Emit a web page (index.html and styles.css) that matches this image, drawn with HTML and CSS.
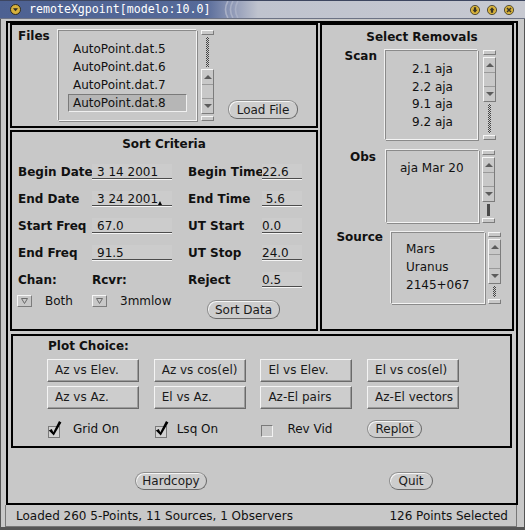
FILE: index.html
```html
<!DOCTYPE html>
<html lang="en">
<head>
    <meta charset="UTF-8">
    <meta name="viewport" content="width=device-width, initial-scale=1.0">
    <title>remoteXgpoint</title>
    <link rel="stylesheet" href="styles.css">
</head>
<body>
    <div class="window">
        <div class="titlebar">
            <svg class="wm-menu" width="11" height="11" viewBox="0 0 11 11">
                <circle cx="5.5" cy="5.5" r="5" fill="#d6b13c" stroke="#2c2a20"/>
                <path d="M3 4.3h5L5.5 7.3z" fill="#2c2a20"/>
            </svg>
            <span class="title">remoteXgpoint[modelo:10.0]</span>
            <svg class="grooves" width="24" height="17" viewBox="0 0 24 17">
                <path d="M6 0Q1 8.5 6 17M11 0Q6 8.5 11 17M16 0Q11 8.5 16 17" fill="none" stroke="#a9b0c6" stroke-width="1.6"/>
            </svg>
            <div class="wm-buttons">
                <svg width="10" height="10" viewBox="0 0 10 10">
                    <circle cx="5" cy="5" r="4.6" fill="#d6b13c" stroke="#3a3524" stroke-width="0.8"/>
                    <path d="M3.9 2.2h2.2v2.6h1.4L5 7.8 2.5 4.8h1.4z" fill="#3a3524"/>
                </svg>
                <svg width="10" height="10" viewBox="0 0 10 10">
                    <circle cx="5" cy="5" r="4.6" fill="#d6b13c" stroke="#3a3524" stroke-width="0.8"/>
                    <path d="M3.9 7.8h2.2V5.2h1.4L5 2.2 2.5 5.2h1.4z" fill="#3a3524"/>
                </svg>
                <svg width="10" height="10" viewBox="0 0 10 10">
                    <circle cx="5" cy="5" r="4.6" fill="#d6b13c" stroke="#3a3524" stroke-width="0.8"/>
                    <path d="M3 3l4 4M7 3l-4 4" stroke="#3a3524" stroke-width="1.5"/>
                </svg>
            </div>
        </div>

        <div class="form">
            <div class="upper">
                <div class="left-col">
                    <!-- file chooser -->
                    <section class="panel files">
                        <div class="label files-label">Files</div>
                        <div class="scroll-list files-box">
                            <div class="list files-list">
                                <div class="item">AutoPoint.dat.5</div>
                                <div class="item">AutoPoint.dat.6</div>
                                <div class="item">AutoPoint.dat.7</div>
                                <div class="item selected">AutoPoint.dat.8</div>
                            </div>
                            <div class="scroll">
                                <span class="cap"></span>
                                <span class="cable"></span>
                                <div class="elevator"><span class="up"></span><span class="drag"></span><span class="down"></span></div>
                                <span class="cap"></span>
                            </div>
                        </div>
                        <button class="pill load-btn">Load File</button>
                    </section>

                    <!-- sort criteria -->
                    <section class="panel sort">
                        <div class="panel-title">Sort Criteria</div>
                        <div class="criteria">
                            <div class="label">Begin Date</div>
                            <div class="field wide">3 14 2001</div>
                            <div class="label">Begin Time</div>
                            <div class="field">22.6</div>

                            <div class="label">End Date</div>
                            <div class="field wide">3 24 2001<span class="caret"></span></div>
                            <div class="label">End Time</div>
                            <div class="field">&nbsp;5.6</div>

                            <div class="label">Start Freq</div>
                            <div class="field wide">67.0</div>
                            <div class="label">UT Start</div>
                            <div class="field">0.0</div>

                            <div class="label">End Freq</div>
                            <div class="field wide">91.5</div>
                            <div class="label">UT Stop</div>
                            <div class="field">24.0</div>

                            <div class="label">Chan:</div>
                            <div class="label">Rcvr:</div>
                            <div class="label">Reject</div>
                            <div class="field">0.5</div>
                        </div>
                        <div class="criteria menus">
                            <div class="menu first-menu">
                                <span class="menu-btn"><svg width="7" height="6" viewBox="0 0 7 6"><path d="M0.5 0.5h6L3.5 5.5z" fill="none" stroke="#6a6a6a"/></svg></span>
                                <span>Both</span>
                            </div>
                            <div class="menu">
                                <span class="menu-btn"><svg width="7" height="6" viewBox="0 0 7 6"><path d="M0.5 0.5h6L3.5 5.5z" fill="none" stroke="#6a6a6a"/></svg></span>
                                <span>3mmlow</span>
                            </div>
                            <button class="pill sort-btn">Sort Data</button>
                        </div>
                    </section>
                </div>

                <!-- removal lists -->
                <section class="panel removals">
                    <div class="panel-title removals-title">Select Removals</div>

                    <div class="pick-row scan-row">
                        <div class="label pick-label">Scan</div>
                        <div class="scroll-list scan-box">
                            <div class="list scan-list">
                                <div class="item">2.1 aja</div>
                                <div class="item">2.2 aja</div>
                                <div class="item">9.1 aja</div>
                                <div class="item">9.2 aja</div>
                            </div>
                            <div class="scroll">
                                <span class="cap"></span>
                                <div class="elevator"><span class="up"></span><span class="drag"></span><span class="down"></span></div>
                                <span class="cable"></span>
                                <span class="cap"></span>
                            </div>
                        </div>
                    </div>

                    <div class="pick-row obs-row">
                        <div class="label pick-label">Obs</div>
                        <div class="scroll-list obs-box">
                            <div class="list obs-list">
                                <div class="item">aja Mar 20</div>
                            </div>
                            <div class="scroll">
                                <span class="cap"></span>
                                <div class="elevator"><span class="up"></span><span class="drag"></span><span class="down"></span></div>
                                <span class="cable solid"></span>
                                <span class="cap"></span>
                            </div>
                        </div>
                    </div>

                    <div class="pick-row source-row">
                        <div class="label pick-label">Source</div>
                        <div class="scroll-list source-box">
                            <div class="list source-list">
                                <div class="item">Mars</div>
                                <div class="item">Uranus</div>
                                <div class="item">2145+067</div>
                            </div>
                            <div class="scroll">
                                <span class="cap"></span>
                                <div class="elevator"><span class="up"></span><span class="drag"></span><span class="down"></span></div>
                                <span class="cable"></span>
                                <span class="cap"></span>
                            </div>
                        </div>
                    </div>
                </section>
            </div>

            <!-- plot selection -->
            <section class="panel plot">
                <div class="label plot-label">Plot Choice:</div>
                <div class="plot-grid">
                    <button class="plot-btn">Az vs Elev.</button>
                    <button class="plot-btn">Az vs cos(el)</button>
                    <button class="plot-btn">El vs Elev.</button>
                    <button class="plot-btn">El vs cos(el)</button>
                    <button class="plot-btn">Az vs Az.</button>
                    <button class="plot-btn">El vs Az.</button>
                    <button class="plot-btn">Az-El pairs</button>
                    <button class="plot-btn">Az-El vectors</button>
                </div>
                <div class="plot-grid options">
                    <label class="option">
                        <svg class="check" width="16" height="18" viewBox="0 0 16 18">
                            <rect x="1.5" y="6.5" width="11" height="11" fill="#d2d2d2" stroke="#7a7a7a"/>
                            <path d="M1.8 10.4l3-1.4 1.5 3.2L12 1l2.4 1.4-7.6 13.2z" fill="#000"/>
                        </svg>
                        <span class="opt-text">Grid On</span>
                    </label>
                    <label class="option">
                        <svg class="check" width="16" height="18" viewBox="0 0 16 18">
                            <rect x="1.5" y="6.5" width="11" height="11" fill="#d2d2d2" stroke="#7a7a7a"/>
                            <path d="M1.8 10.4l3-1.4 1.5 3.2L12 1l2.4 1.4-7.6 13.2z" fill="#000"/>
                        </svg>
                        <span class="opt-text lsq">Lsq On</span>
                    </label>
                    <label class="option">
                        <span class="box"></span>
                        <span class="opt-text rev">Rev Vid</span>
                    </label>
                    <div><button class="pill replot-btn">Replot</button></div>
                </div>
            </section>

            <div class="actions">
                <button class="pill hardcopy-btn">Hardcopy</button>
                <button class="pill quit-btn">Quit</button>
            </div>
        </div>

        <div class="status">
            <span>Loaded 260 5-Points, 11 Sources, 1 Observers</span>
            <span>126 Points Selected</span>
        </div>
    </div>
</body>
</html>
```

FILE: styles.css
```css
* {
    box-sizing: border-box;
}

body {
    margin: 0;
    background: #cccccc;
    font-family: "DejaVu Sans", sans-serif;
    font-size: 12px;
    color: #111;
}

button {
    font: inherit;
    color: #1a1a1a;
    margin: 0;
}

/* window manager frame */
.window {
    width: 525px;
    height: 530px;
    background: #c8c8c8;
    box-shadow: inset 1px 0 #555, inset -1px 0 #555, inset 0 -3px #555;
    display: flex;
    flex-direction: column;
}

.titlebar {
    height: 19px;
    flex: none;
    display: flex;
    align-items: center;
    padding-left: 10px;
    background: linear-gradient(to right, #4d6192 0, #566a99 205px, #8e98b6 232px, #bfc3ce 258px, #c7c9d1 100%);
    border-top: 1px solid #3d4660;
    border-bottom: 1px solid #6c7284;
}

.title {
    margin-left: 8px;
    font-family: "DejaVu Sans Mono", monospace;
    font-size: 11.6px;
    color: #fff;
    line-height: 17px;
}

.grooves {
    display: block;
    margin-left: 12px;
}

.wm-buttons {
    margin-left: auto;
    margin-right: 11px;
    display: flex;
    gap: 7px;
}

.wm-buttons svg {
    display: block;
}

/* main form */
.form {
    margin: 2px 7px 0 6px;
    height: 484px;
    flex: none;
    border: 2px solid #000;
}

.upper {
    display: flex;
    gap: 2px;
    padding-left: 2px;
    height: 308px;
}

.left-col {
    width: 308px;
    display: flex;
    flex-direction: column;
    gap: 2px;
}

.panel {
    border: 2px solid #000;
}

.label {
    font-weight: bold;
    line-height: 14px;
    white-space: nowrap;
}

.panel-title {
    font-weight: bold;
    text-align: center;
    line-height: 14px;
    padding-top: 5px;
}

/* lists with their scrollbars */
.scroll-list {
    display: flex;
    flex: none;
}

.list {
    border: 1px solid;
    border-color: #8a8a8a #f4f4f4 #f4f4f4 #8a8a8a;
    box-shadow: -1px -1px 0 #f0f0f0, 1px 1px 0 #8a8a8a;
    white-space: nowrap;
}

.item {
    line-height: 18px;
    height: 18px;
}

.scroll {
    width: 13px;
    display: flex;
    flex-direction: column;
    align-items: center;
    gap: 2px;
}

.cap {
    width: 13px;
    height: 5px;
    flex: none;
    border: 1px solid;
    border-color: #f6f6f6 #7c7c7c #7c7c7c #f6f6f6;
}

.cable {
    flex: 1;
    width: 3px;
    background-image: repeating-conic-gradient(#444 0 25%, #cfcfcf 0 50%);
    background-size: 2px 2px;
}

.cable.solid {
    background: #4a4a4a;
}

.elevator {
    width: 13px;
    height: 45px;
    flex: none;
    display: flex;
    flex-direction: column;
    border: 1px solid;
    border-color: #f6f6f6 #7c7c7c #7c7c7c #f6f6f6;
}

.elevator span {
    flex: 1;
    display: flex;
    align-items: center;
    justify-content: center;
}

.elevator .drag {
    border-top: 1px solid #9a9a9a;
    border-bottom: 1px solid #9a9a9a;
}

.elevator .up::after,
.elevator .down::after {
    content: "";
    border-left: 4px solid transparent;
    border-right: 4px solid transparent;
}

.elevator .up::after {
    border-bottom: 4px solid #5c5c5c;
}

.elevator .down::after {
    border-top: 4px solid #5c5c5c;
}

/* files */
.files {
    height: 105px;
    display: flex;
    align-items: flex-start;
    padding: 5px 0 0 6px;
}

.files-label {
    width: 40px;
    margin-top: -1px;
}

.files-box {
    height: 91px;
    gap: 4px;
}

.files-list {
    width: 139px;
    padding: 9px 0 0 9px;
}

.files-list .item {
    width: 119px;
    padding-left: 4px;
    border: 1px solid transparent;
    line-height: 16px;
}

.files-list .selected {
    background: #b6b6b6;
    border-color: #7a7a7a #f0f0f0 #f0f0f0 #7a7a7a;
}

.pill {
    height: 18px;
    padding: 0;
    border: 1px solid;
    border-color: #8e8e8e #6a6a6a #6a6a6a #8e8e8e;
    border-radius: 9px;
    background: #cdcdcd;
    box-shadow: inset 1px 1px 0 #f4f4f4;
    line-height: 16px;
    text-align: center;
}

.load-btn {
    width: 70px;
    margin: 70px 0 0 14px;
    height: 19px;
}

/* sort criteria */
.sort {
    height: 201px;
}

.criteria {
    display: grid;
    grid-template-columns: 74px 96px 74px 40px;
    grid-auto-rows: 16px;
    row-gap: 11px;
    padding-left: 6px;
    margin-top: 13px;
}

.criteria .label {
    line-height: 16px;
}

.field {
    line-height: 16px;
    height: 16px;
    background:
        linear-gradient(#4c4c4c, #4c4c4c) 0 14px / 100% 1px no-repeat,
        linear-gradient(#f4f4f4, #f4f4f4) 0 15px / 100% 1px no-repeat,
        #cccccc;
    white-space: nowrap;
}

.field.wide {
    width: 80px;
    padding-left: 5px;
}

.caret {
    display: inline-block;
    width: 0;
    border-left: 2.5px solid transparent;
    border-right: 2.5px solid transparent;
    border-bottom: 4px solid #000;
    vertical-align: -2px;
}

.criteria.menus {
    margin-top: 5px;
    align-items: start;
}

.menu {
    display: flex;
    align-items: center;
    gap: 13px;
    height: 16px;
}

.first-menu {
    margin-left: -1px;
}

.menu-btn {
    width: 15px;
    height: 12px;
    display: flex;
    align-items: center;
    justify-content: center;
    border: 1px solid;
    border-color: #f6f6f6 #7c7c7c #7c7c7c #f6f6f6;
}

.menu-btn svg {
    display: block;
}

.sort-btn {
    grid-column: 3 / 5;
    width: 73px;
    margin: 7px 0 0 19px;
    height: 19px;
}

/* removals */
.removals {
    width: 194px;
}

.removals-title {
    padding-left: 10px;
}

.pick-row {
    display: flex;
    align-items: flex-start;
    padding-left: 5px;
}

.pick-label {
    width: 56px;
    text-align: right;
}

.scan-row {
    margin-top: 6px;
}

.scan-row .pick-label {
    padding-right: 6px;
    margin: -1px 2px 0 0;
}

.obs-row {
    margin-top: 10px;
}

.obs-row .pick-label {
    padding-right: 7px;
    margin-right: 3px;
}

.source-row {
    margin-top: 9px;
}

.source-row .pick-label {
    margin: -2px 8px 0 0;
}

.scan-box {
    height: 90px;
    gap: 5px;
}

.scan-list {
    width: 93px;
    padding: 10px 0 0 26px;
}

.scan-list .item {
    line-height: 17.6px;
    height: 17.6px;
}

.obs-box {
    height: 73px;
    gap: 3px;
}

.obs-list {
    width: 93px;
    padding: 8px 0 0 13px;
}

.source-box {
    height: 72px;
    gap: 3px;
}

.source-list {
    width: 94px;
    padding: 8px 0 0 14px;
}

.source-list .item {
    line-height: 17.8px;
    height: 17.8px;
}

/* plot choice */
.plot {
    width: 501px;
    height: 114px;
    margin: 3px 0 0 3px;
    padding: 3px 0 0 34px;
}

.plot-label {
    margin-left: 1px;
}

.plot-grid {
    display: grid;
    grid-template-columns: repeat(4, 92px);
    grid-auto-rows: 23px;
    column-gap: 14.7px;
    row-gap: 4px;
    margin-top: 6px;
}

.plot-btn {
    height: 23px;
    padding: 0 0 0 7px;
    text-align: left;
    line-height: 21px;
    background: #cdcdcd;
    border: 1px solid;
    border-color: #f4f4f4 #6a6a6a #6a6a6a #f4f4f4;
    box-shadow: inset -1px -1px 0 #9c9c9c;
}

.plot-grid.options {
    grid-auto-rows: 18px;
    margin-top: 11px;
}

.option {
    display: flex;
    align-items: center;
    height: 18px;
}

.check {
    display: block;
    margin-top: -1px;
}

.opt-text {
    margin-left: 10px;
}

.opt-text.lsq {
    margin-left: 7px;
}

.box {
    width: 12px;
    height: 12px;
    margin: 3px 0 0 1px;
    border: 1px solid;
    border-color: #7a7a7a #f2f2f2 #f2f2f2 #7a7a7a;
}

.opt-text.rev {
    margin-left: 14px;
}

.replot-btn {
    width: 55px;
}

/* bottom buttons */
.actions {
    display: flex;
    padding: 24px 0 0 127px;
}

.hardcopy-btn {
    width: 72px;
}

.quit-btn {
    width: 44px;
    margin-left: 182px;
}

/* status line */
.status {
    margin: 0 8px 0 5px;
    height: 22px;
    flex: none;
    display: flex;
    justify-content: space-between;
    align-items: center;
    padding: 0 8px 0 10px;
    border: 1px solid #777;
    border-top: none;
    line-height: 20px;
}
```
